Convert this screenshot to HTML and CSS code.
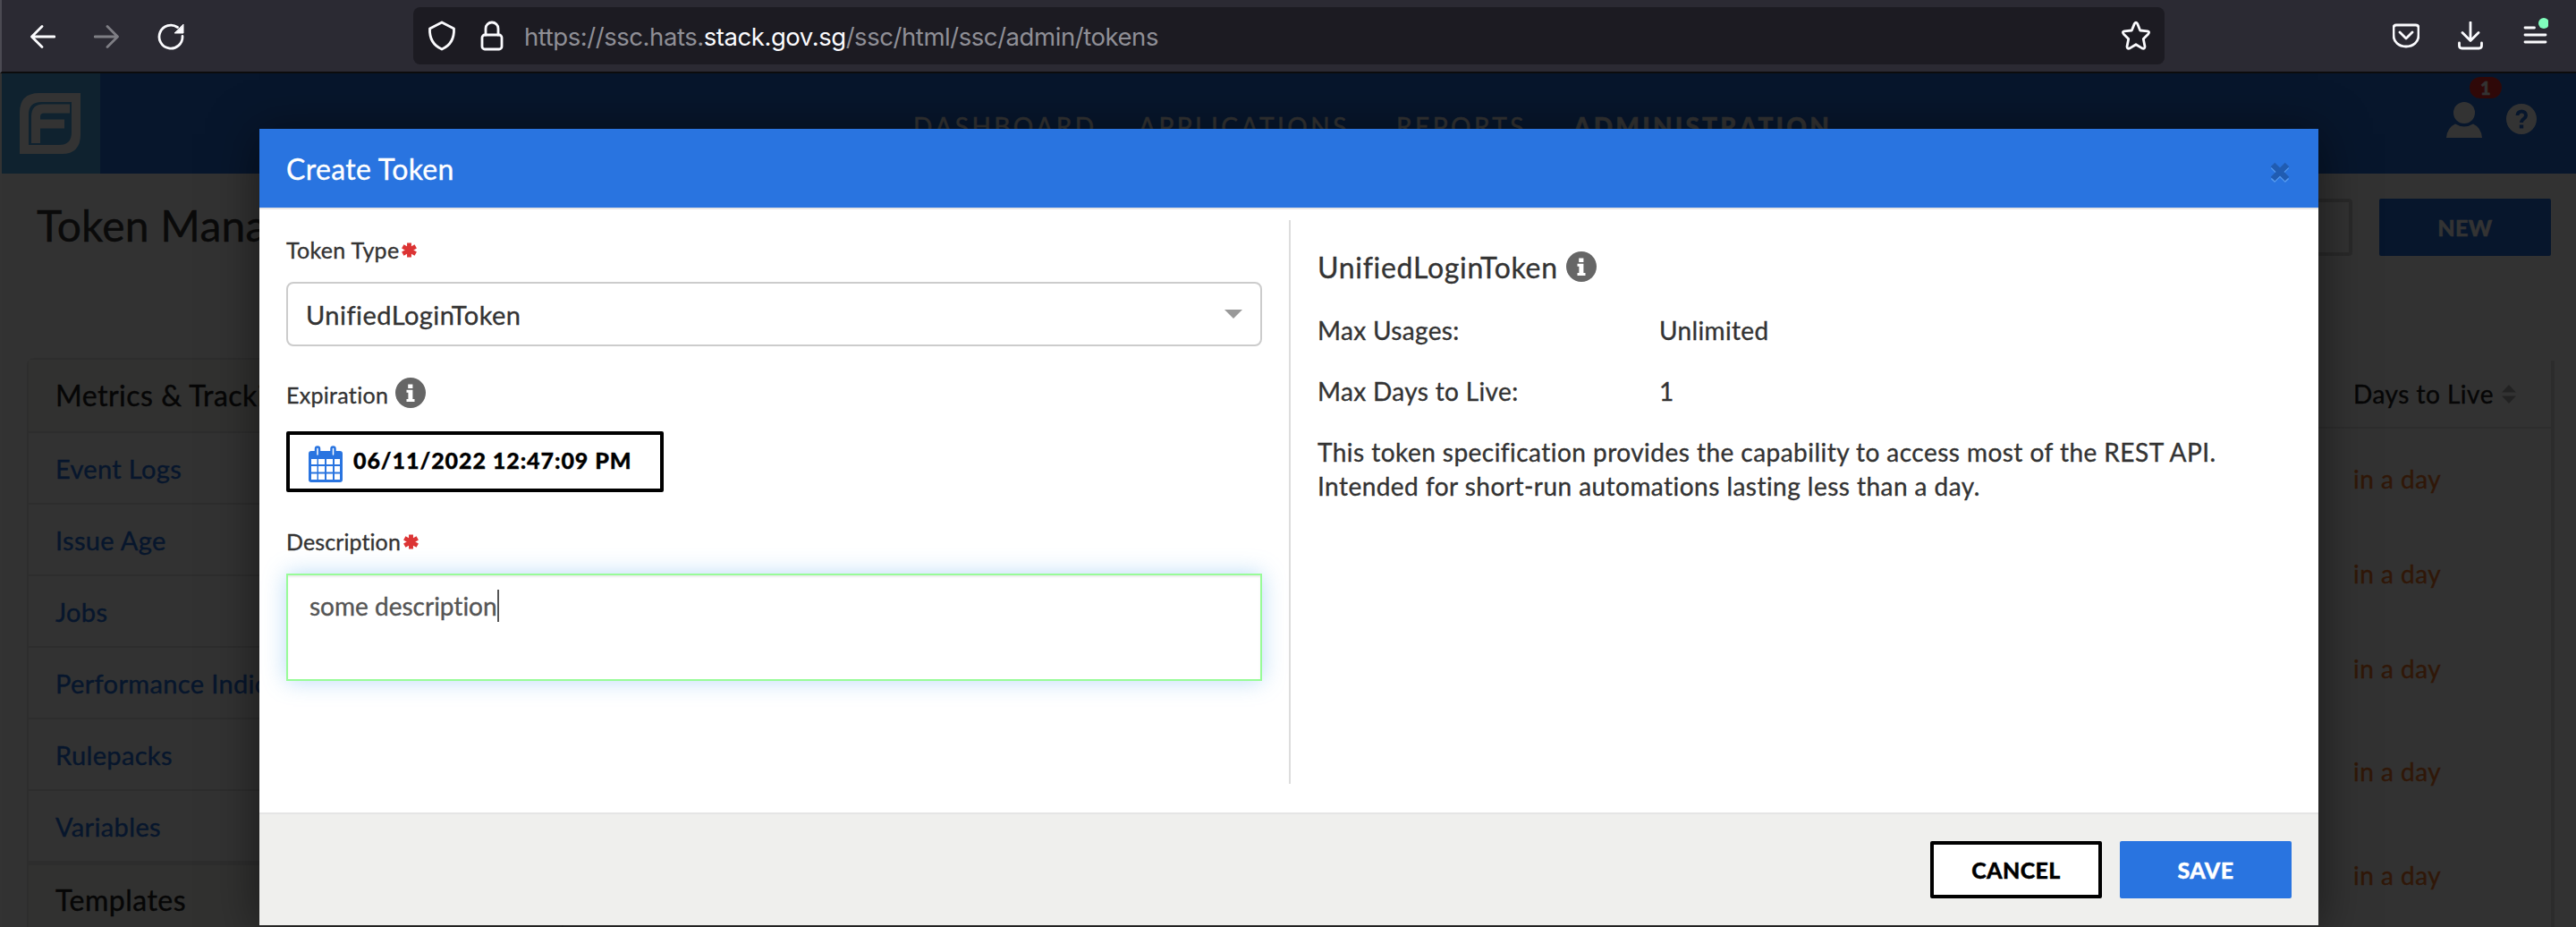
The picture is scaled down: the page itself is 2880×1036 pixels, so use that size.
FILE: index.html
```html
<!DOCTYPE html>
<html lang="en">
<head>
<meta charset="utf-8">
<title>Token Management</title>
<link rel="stylesheet" href="styles.css">
</head>
<body>
<svg width="0" height="0" class="defs">
  <symbol id="info" viewBox="0 0 34 34"><circle cx="17" cy="17" r="17" fill="#666"/><path fill="#fff" d="M14.200 7.500h5.200v4.600h-5.200zM12.500 13.700h6.900v10.400h2.100v3H12.500v-3h1.900v-7.400h-1.900z"/></symbol>
  <symbol id="required" viewBox="0 0 16 16"><path d="M8 .5v15M1.200 4.200l13.600 7.600M14.800 4.200L1.200 11.800" stroke="#dc3434" stroke-width="4.600"/></symbol>
</svg>

<header class="chrome">
  <div class="chrome-nav">
    <svg width="28" height="26" viewBox="0 0 28 26"><path d="M27 13H2M13 1.500L1.500 13 13 24.500"/></svg>
    <svg class="dim" width="28" height="26" viewBox="0 0 28 26"><path d="M1 13h25M15 1.500L26.500 13 15 24.500"/></svg>
    <svg width="30" height="30" viewBox="0 0 30 30"><path d="M28 14.500A13 13 0 1 1 22.500 4.500"/><path class="solid" d="M29 1.500v9.500h-9.500z"/></svg>
  </div>
  <div class="urlbar">
    <svg width="32" height="34" viewBox="0 0 32 34"><path d="M16 2L29.500 9C30 20 25 28 16 32 7 28 2 20 2.500 9z"/></svg>
    <svg width="26" height="34" viewBox="0 0 26 34"><rect x="2" y="16" width="22" height="16" rx="3"/><path d="M6 16V9a7 7 0 0 1 14 0v7"/></svg>
    <div class="url">https://ssc.hats.<b>stack.gov.sg</b>/ssc/html/ssc/admin/tokens</div>
    <svg class="star" width="34" height="34" viewBox="0 0 34 34"><path d="M15.400 3.400Q17 .8 18.600 3.400L21.700 11 29.900 11.800Q32.800 12.600 30.800 14.900L25.300 20.400 27 28.900Q26.900 32.200 23.800 30.900L17 26.700 10.200 30.900Q7.100 32.200 7 28.900L8.700 20.400 3.200 14.900Q1.200 12.600 4.100 11.800L12.300 11z"/></svg>
  </div>
  <div class="chrome-tools">
    <svg width="30" height="28" viewBox="0 0 30 28"><path d="M4 2h22q3 0 3 3v8c0 8-6 13-14 13S1 21 1 13V5q0-3 3-3zM8 10l7 7 7-7"/></svg>
    <svg width="28" height="32" viewBox="0 0 28 32"><path d="M14 1v20M5 12.500l9 9 9-9M1.500 24v3q0 3 3 3h19q3 0 3-3v-3"/></svg>
    <svg width="28" height="34" viewBox="0 0 28 34"><path d="M2 14h10.500M2 22h23M2 30h23"/><circle class="dot" cx="23" cy="9" r="6"/></svg>
  </div>
</header>

<div class="viewport">
  <div class="page">
    <div class="topbar">
      <div class="logo">
        <svg width="68" height="68" viewBox="0 0 68 68"><path fill="#fff" fill-rule="evenodd" d="M22 0H68V46Q68 68 47 68H0V22Q0 0 22 0ZM24 10H58V44Q58 58 44 58H10V24Q10 10 24 10Z"/><path fill="#fff" d="M56 12.500v10H27q-4 0-4 4v3h27v10H23V56H13V26.500q0-14 13-14z"/></svg>
      </div>
      <nav class="menu"><span class="m1">DASHBOARD</span><span class="m2">APPLICATIONS</span><span class="m3">REPORTS</span><span class="m4">ADMINISTRATION</span></nav>
      <div class="account">
        <svg width="40" height="40" viewBox="0 0 40 40"><circle cx="20" cy="12" r="12" fill="#fff"/><path fill="#fff" d="M10 24.500q10 6 20 0 9 4 10 15.500H0Q1 28.500 10 24.500z"/></svg>
        <span class="badge">1</span>
        <div class="help"><svg width="34" height="34" viewBox="0 0 34 34"><circle cx="17" cy="17" r="17" fill="#fff"/><path d="M12.500 13c0-6 9.500-6 9.500 0 0 4-5 3.500-5 8" fill="none" stroke="#2470dc" stroke-width="4"/><path d="M14.800 23.500h4.400v4h-4.400z" fill="#2470dc"/></svg></div>
      </div>
    </div>
    <div class="titlebar">
      <h1>Token Management</h1>
      <div class="search"></div>
      <div class="new">NEW</div>
    </div>
    <div class="content">
      <aside class="sidebar">
        <div class="group">Metrics &amp; Tracking</div>
        <a>Event Logs</a><a>Issue Age</a><a>Jobs</a><a>Performance Indicators</a><a>Rulepacks</a><a class="last">Variables</a>
        <div class="group second">Templates</div>
      </aside>
      <section class="tokens">
        <div class="thead">Days to Live <svg width="16" height="21" viewBox="0 0 16 21"><path fill="#aaa" d="M8 0l8 8.500H0zM0 12.500h16L8 21z"/></svg></div>
        <div class="row">in a day</div><div class="row">in a day</div><div class="row tall">in a day</div><div class="row taller">in a day</div><div class="row taller">in a day</div>
      </section>
    </div>
  </div>
  <div class="backdrop"></div>

  <div class="dialog">
    <div class="dialog-head"><span>Create Token</span>
      <svg width="22" height="24" viewBox="0 0 22 24"><path d="M3 5l16 16M19 5L3 21" stroke="#559af0" stroke-width="6"/><path d="M3 3l16 16M19 3L3 19" stroke="#205cb2" stroke-width="6.500"/></svg>
    </div>
    <div class="dialog-body">
      <div class="form">
        <div class="label"><span>Token Type</span><svg width="17" height="17"><use href="#required"/></svg></div>
        <div class="select"><span>UnifiedLoginToken</span><svg width="20" height="10" viewBox="0 0 20 10"><path fill="#999" d="M0 0h20L10 10z"/></svg></div>
        <div class="label exp"><span>Expiration</span><svg class="info" width="34" height="34"><use href="#info"/></svg></div>
        <div class="date">
          <svg width="38" height="42" viewBox="0 0 38 42"><rect y="6" width="38" height="35" rx="3" fill="#2974e0"/><path fill="#fff" d="M3 15h6.500v6H3zm8 0h7v6h-7zm9 0h7v6h-7zm9 0h6v6h-6zM3 23h6.500v6.500H3zm8 0h7v6.500h-7zm9 0h7v6.500h-7zm9 0h6v6.500h-6zM3 31.500h6.500V38H3zm8 0h7V38h-7zm9 0h7V38h-7zm9 0h6V38h-6z"/><path d="M8 3.500q0-2 2-2t2 2V10q0 2-2 2t-2-2zM25.500 3.500q0-2 2-2t2 2V10q0 2-2 2t-2-2z" fill="#fff" stroke="#2974e0" stroke-width="2.500"/></svg>
          <span>06/11/2022 12:47:09 PM</span>
        </div>
        <div class="label desc"><span>Description</span><svg width="17" height="17"><use href="#required"/></svg></div>
        <div class="textarea"><span>some description</span><i></i></div>
      </div>
      <div class="spec">
        <div class="spec-title"><span>UnifiedLoginToken</span><svg width="34" height="34"><use href="#info"/></svg></div>
        <dl><dt>Max Usages:</dt><dd>Unlimited</dd><dt>Max Days to Live:</dt><dd>1</dd></dl>
        <p>This token specification provides the capability to access most of the REST API.<br>Intended for short-run automations lasting less than a day.</p>
      </div>
    </div>
    <div class="dialog-foot"><div class="btn cancel">CANCEL</div><div class="btn save">SAVE</div></div>
  </div>
</div>
</body>
</html>
```
FILE: styles.css
```css
* { box-sizing: border-box; }
body { margin: 0; width: 2880px; height: 1036px; overflow: hidden; font-family: Lato, sans-serif; font-size: 28px; color: #333; background: #0c0c0c; font-variant-ligatures: none; letter-spacing: .35px; }
svg { display: block; flex: none; }
.defs { position: absolute; }
span, .url, a { white-space: nowrap; }

.chrome { height: 82px; background: #2b2a33; border-bottom: 2px solid #0c0c0d; border-left: 2px solid #4b4a52; display: flex; align-items: center; }
.chrome svg { fill: none; stroke: #fbfbfe; stroke-width: 2.8; stroke-linejoin: round; stroke-linecap: round; }
.chrome svg .solid { fill: #fbfbfe; stroke-width: 1; }
.chrome svg .dot { fill: #80ffbd; stroke: none; }
.chrome-nav { width: 460px; padding: 2px 0 0 32px; display: flex; align-items: center; gap: 43px; }
.chrome-nav .dim { opacity: .4; }
.urlbar { width: 1958px; height: 64px; background: #1c1b22; border-radius: 8px; display: flex; align-items: center; padding: 0 15px 0 16px; }
.urlbar svg + svg { margin-left: 27px; }
.url { margin: 2px 0 0 23px; font-family: Inter, sans-serif; font-size: 27.5px; color: #8f8f96; letter-spacing: -.44px; }
.url b { font-weight: 400; color: #fbfbfe; }
.urlbar .star { margin-left: auto; }
.chrome-tools { display: flex; align-items: center; margin-left: 255px; gap: 43px; }
.chrome-tools svg:last-child { margin: -12px 0 0 2px; }

.viewport { position: relative; height: 954px; overflow: hidden; }
.page { height: 954px; background: #f9f9f9; border-left: 2px solid #fff; -webkit-text-stroke: .4px; }
.topbar { height: 112px; background: #2470dc; display: flex; }
.logo { width: 110px; padding: 22px 20px; background: #4aacea; }
.menu { display: flex; align-items: flex-start; padding: 42px 0 0 909px; width: 2623px; color: #fff; font-size: 28px; line-height: 34px; letter-spacing: 3.5px; }
.menu span { flex: none; }
.m1 { width: 252px; } .m2 { width: 288px; } .m3 { width: 198px; } .m4 { font-weight: 900; letter-spacing: 3.2px; }
.account { display: flex; position: relative; padding-top: 32px; }
.account .help { margin: 2px 0 0 27px; }
.badge { position: absolute; left: 26px; top: 4px; width: 36px; height: 24px; border-radius: 12px; background: #e82c2c; color: #fff; font-size: 20px; line-height: 25px; font-weight: 900; text-align: center; }
.titlebar { height: 206px; padding: 28px 28px 0 39px; display: flex; }
h1 { margin: 1px 0 0; width: 251px; overflow: hidden; font-size: 48px; line-height: 58px; font-weight: 400; color: #333; white-space: nowrap; letter-spacing: .2px; }
.search { width: 500px; height: 64px; margin-left: auto; border: 4px solid #ccc; border-radius: 4px; }
.new { width: 192px; height: 64px; margin-left: 30px; background: #2470dc; border-radius: 2px; color: #fff; font-size: 25px; line-height: 65px; text-align: center; font-weight: 900; letter-spacing: .4px; }
.content { display: flex; justify-content: space-between; padding: 0 24px 0 28px; }
.sidebar { width: 600px; border: 2px solid #e2e2e2; border-radius: 8px 8px 0 0; }
.group { height: 82px; padding: 18px 30px; background: #f3f2ef; border-bottom: 2px solid #e2e2e2; font-size: 32px; line-height: 44px; color: #222; letter-spacing: .5px; }
.group.second { padding-top: 17px; }
.sidebar a { display: block; height: 80px; padding: 0 30px; border-bottom: 2px solid #e2e2e2; color: #2470dc; font-size: 29px; line-height: 80px; letter-spacing: .35px; }
.sidebar a.last { height: 83px; border-bottom-width: 5px; }
.tokens { width: 500px; height: 640px; border-right: 4px solid #ddd; margin-top: 3px; letter-spacing: .5px; }
.thead { height: 76px; border-bottom: 2px solid #e2e2e2; padding-left: 275px; display: flex; align-items: center; gap: 9px; color: #222; }
.row { height: 106px; padding: 39px 0 0 275px; line-height: 34px; color: #ed7628; }
.row.tall { height: 115px; } .row.taller { height: 116px; }
.backdrop { position: absolute; inset: 0; background: rgba(0,0,0,.8); }

.dialog { position: absolute; left: 290px; top: 62px; width: 2302px; height: 890px; background: #fff; box-shadow: 0 6px 50px rgba(0,0,0,.5); display: flex; flex-direction: column; -webkit-text-stroke: .35px; }
.dialog-head { height: 90px; background: #2974e0; border-bottom: 2px solid #e5e5e5; padding: 0 32px 0 30px; color: #fff; font-size: 32px; display: flex; justify-content: space-between; align-items: center; }
.dialog-head svg { margin-top: 10px; }
.dialog-body { flex: 1; display: flex; padding: 12px 30px 32px; }
.form { width: 1091px; padding-top: 18px; }
.label { display: flex; height: 30px; line-height: 30px; font-size: 25px; align-items: center; gap: 3px; letter-spacing: .3px; }
.select { margin-top: 21px; height: 72px; border: 2px solid #ccc; border-radius: 8px; padding: 0 20px 0 20px; display: flex; justify-content: space-between; align-items: center; font-size: 29px; letter-spacing: .45px; }
.label.exp { margin-top: 39px; gap: 8px; }
.label .info { margin-top: -5px; }
.date { margin-top: 26px; width: 422px; height: 68px; border: 4px solid #000; border-radius: 2px; padding: 0 21px; display: flex; align-items: center; color: #000; font-weight: 900; font-size: 25px; letter-spacing: .93px; }
.date span { margin: -5px 0 0 12px; }
.date svg { margin-top: 5px; }
.label.desc { margin-top: 40px; letter-spacing: .1px; }
.textarea { margin-top: 21px; height: 120px; border: 2px solid #98fb98; padding: 16px 24px; display: flex; color: #555; box-shadow: inset 0 2px 2px rgba(0,0,0,.075), 0 0 24px rgba(82,168,236,.4); line-height: 36px; letter-spacing: 0; }
.textarea i { width: 2px; height: 36px; background: #555; }
.spec { margin-left: 30px; border-left: 2px solid #ddd; padding: 32px 0 0 30px; flex: 1; }
.spec-title { font-size: 32px; height: 40px; display: flex; gap: 9px; align-items: center; letter-spacing: .7px; }
dl { margin: 34px 0 0; display: grid; grid-template-columns: 382px 1fr; grid-auto-rows: 68px; line-height: 34px; }
dd { margin: 0; }
p { margin: -2px 0 0; line-height: 38px; letter-spacing: .46px; }
.dialog-foot { height: 126px; background: #efefed; border-top: 2px solid #e5e5e5; display: flex; justify-content: flex-end; gap: 20px; padding: 30px 30px 0; }
.btn { width: 192px; height: 64px; border: 4px solid #000; border-radius: 2px; background: #fff; color: #000; font-weight: 900; font-size: 25px; line-height: 57px; text-align: center; letter-spacing: .4px; }
.save { background: #2974e0; border-color: #2974e0; color: #fff; }
```
